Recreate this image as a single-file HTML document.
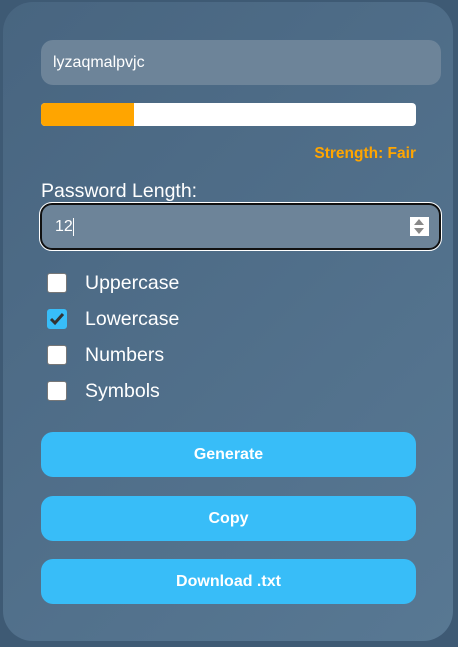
<!DOCTYPE html>
<html><head><style>
*{box-sizing:border-box;margin:0;padding:0}
body{width:458px;height:647px;background:#3e5a74;font-family:"Liberation Sans",sans-serif;position:relative;overflow:hidden}
.card{position:absolute;left:3px;top:2px;width:450px;height:639px;border-radius:30px;background:linear-gradient(135deg,#486580,#587893)}
.abs{position:absolute}
.pw{left:41px;top:40px;width:400px;height:45px;background:#6d8499;border-radius:12px;color:#fff;font-size:16px;line-height:45px;padding-left:12px}
.bar{left:41px;top:103px;width:375px;height:23px;background:#fff;border-radius:4px;overflow:hidden}
.bar div{width:93px;height:100%;background:#ffa500}
.st{left:150px;width:266px;top:145px;text-align:right;color:#ffa500;font-weight:bold;font-size:15.5px}
.lbl{left:41px;top:180px;color:#fff;font-size:19.5px}
.num{left:40px;top:203px;width:401px;height:47px;border:2px solid #111;outline:1.5px solid #fff;border-radius:12px;background:#6d8499;color:#fff;font-size:16px;line-height:43px;padding-left:13px}
.spin{position:absolute;right:10px;top:12px;width:19px;height:19px;background:#fff}
.spin:before{content:"";position:absolute;left:4px;top:2px;border:5px solid transparent;border-bottom:6px solid #888;border-top:0}
.spin:after{content:"";position:absolute;left:4px;bottom:2px;border:5px solid transparent;border-top:6px solid #888;border-bottom:0}
.cb{left:47px;width:20px;height:20px;background:#fff;border:1px solid #777;border-radius:3px}
.cl{left:85px;color:#fff;font-size:19.5px}
.btn{left:41px;width:375px;height:45px;background:#38bdf8;border-radius:12px;color:#fff;font-weight:bold;font-size:16px;text-align:center;line-height:45px}
</style></head><body>
<div class="card"></div>
<div class="abs pw">lyzaqmalpvjc</div>
<div class="abs bar"><div></div></div>
<div class="abs st">Strength: Fair</div>
<div class="abs lbl">Password Length:</div>
<div class="abs num">12<span style="display:inline-block;width:1px;height:18px;background:#fff;vertical-align:middle"></span><div class="spin"></div></div>
<div class="abs cb" style="top:273px"></div><div class="abs cl" style="top:272px">Uppercase</div>
<div class="abs cb" style="top:309px;background:#38bdf8;border-color:#38bdf8"><svg width="20" height="20" viewBox="0 0 20 20" style="position:absolute;left:-1px;top:-1px"><path d="M4 10l4 4 8-9" stroke="#333" stroke-width="3" fill="none"/></svg></div><div class="abs cl" style="top:308px">Lowercase</div>
<div class="abs cb" style="top:345px"></div><div class="abs cl" style="top:344px">Numbers</div>
<div class="abs cb" style="top:381px"></div><div class="abs cl" style="top:380px">Symbols</div>
<div class="abs btn" style="top:432px">Generate</div>
<div class="abs btn" style="top:496px">Copy</div>
<div class="abs btn" style="top:559px">Download .txt</div>
</body></html>
